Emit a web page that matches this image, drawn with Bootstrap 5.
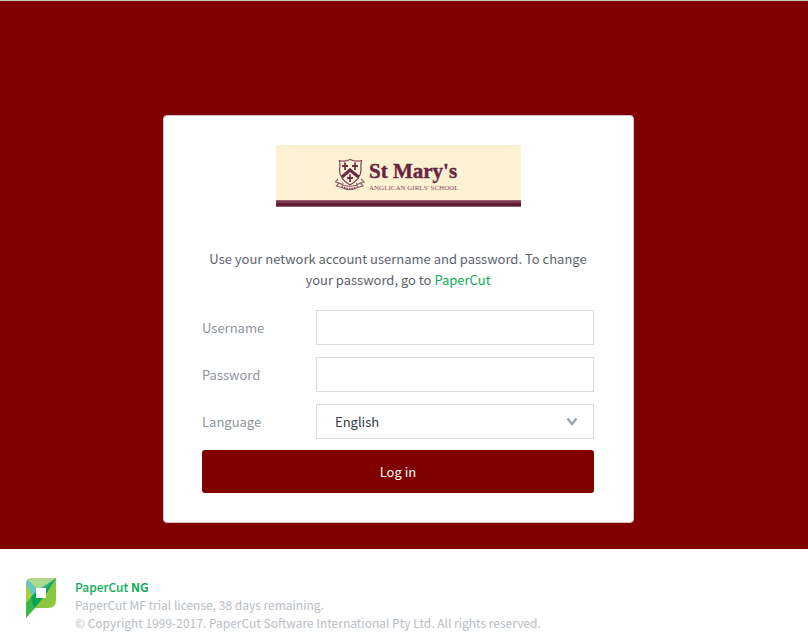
<!DOCTYPE html>
<html lang="en">
<head>
<meta charset="utf-8">
<meta name="viewport" content="width=device-width, initial-scale=1">
<title>PaperCut Login</title>
<link rel="stylesheet" href="https://cdn.jsdelivr.net/npm/bootstrap@5.3.0/dist/css/bootstrap.min.css">
<style>
body { font-family: "Noto Sans CJK SC", "Noto Sans", sans-serif; font-size: 13px; line-height: 21px; color: #5d636b; background: #fff; }
.login-area { background: #800000; border-top: 1px solid #c8c4c0; padding: 114px 11px 26px 0; }
.login-box { max-width: 471px; background: #fff; border: 1px solid #d6c4c4; border-radius: 4px; padding: 29px 39px 29px 38px; }
.school-logo { width: 245px; height: 62px; margin-bottom: 41px; }
.intro { margin-bottom: 20px; }
.brand-link { color: #0eac58; text-decoration: none; }
.field-row { display: grid; grid-template-columns: 114px 1fr; align-items: center; margin-bottom: 12px; }
.field-row label { color: #8e959d; }
.field-row .form-control, .field-row .form-select { height: 35px; font-size: 13px; line-height: 21px; border: 1px solid #d5dbe0; border-radius: 0; color: #343b42; padding: 6px 18px; }
.field-row .form-select { background-image: url("data:image/svg+xml,%3Csvg xmlns='http://www.w3.org/2000/svg' viewBox='0 0 12 10'%3E%3Cpath d='M1.5 1.5 6 7 10.5 1.5' fill='none' stroke='%2394a0aa' stroke-width='2.2'/%3E%3C/svg%3E"); background-size: 12px 10px; background-position: right 15px center; }
.btn-login { background: #800000; color: #fff; height: 43px; font-size: 13px; border: 0; border-radius: 3px; margin-top: -1px; }
.btn-login:hover { background: #6b0000; color: #fff; }
.page-foot { padding: 29px 26px 5px; font-size: 12px; line-height: 18px; color: #b9bec6; }
.foot-text { margin-left: 19px; }
.product-name { font-weight: 500; }
</style>
<script src="https://cdn.jsdelivr.net/npm/bootstrap@5.3.0/dist/js/bootstrap.bundle.min.js"></script>
</head>
<body>
<main class="login-area">
  <div class="login-box mx-auto">
    <svg class="school-logo d-block mx-auto" viewBox="0 0 245 62" role="img" aria-label="St Mary's Anglican Girls' School">
      <rect width="245" height="62" fill="#fdf1d3"/>
      <rect y="55" width="245" height="7" fill="#97606f"/>
      <rect y="56" width="245" height="2" fill="#7b3b50"/>
      <rect y="58" width="245" height="3" fill="#5e1d35"/>
      <g fill="none" stroke="#80405a" stroke-width="1.2">
        <path d="M63.500 15.500Q69 17 74 14.500Q80 17 85.500 15.500Q84.500 20 85 25Q85 34 74 40Q63.500 34 63.500 25Q64.500 20 63.500 15.500Z"/>
        <path d="M66 32 74 25 82.500 32" stroke="#692843" stroke-width="3"/>
        <path d="M69 17.500V25M66 21H72M79 17.500V25M76 21H82M74 29.500V37M71 33H77" stroke="#70304a" stroke-width="1.800"/>
        <path d="M62 34 59.500 37 63 38 60.500 41 66 42.500Q73.500 47 81.500 42.500L87 41 84.500 38 88 37 85 34M63 38Q73.500 45 84.500 38M66 42.500 67 38M81.500 42.500 80.500 38" stroke="#935e70"/>
        <path d="M68 42.500Q74 45 80 42.500" stroke="#7a3d55" stroke-width="1.500" stroke-dasharray="1.500 1"/>
      </g>
      <text x="93" y="33" font-family="Liberation Serif, serif" font-weight="700" font-size="21" fill="#672440" stroke="#672440" stroke-width=".4">St Mary's</text>
      <text x="93" y="45" font-family="Liberation Serif, serif" font-size="7" fill="#88495f">ANGLICAN GIRLS' SCHOOL</text>
    </svg>
    <p class="intro text-center">Use your network account username and password. To change your password, go to <a class="brand-link" href="#">PaperCut</a></p>
    <form>
      <div class="field-row"><label for="username">Username</label><input class="form-control" id="username" type="text"></div>
      <div class="field-row"><label for="password">Password</label><input class="form-control" id="password" type="password"></div>
      <div class="field-row"><label for="language">Language</label><select class="form-select" id="language"><option>English</option></select></div>
      <button class="btn btn-login w-100 d-block" type="submit">Log in</button>
    </form>
  </div>
</main>
<footer class="page-foot d-flex align-items-start">
  <svg class="flex-shrink-0" width="30" height="40" viewBox="0 0 30 40" aria-hidden="true">
    <path d="M6 0H30V22Q30 30 22 30H9L0 40V6Q0 0 6 0Z" fill="#8cc63f"/>
    <path d="M6 0H30L16 10H10L2 2Q4 0 6 0Z" fill="#b0d98e"/>
    <path d="M2 2 10 10V17L5 18 0 7Q0 3 2 2Z" fill="#62c9c8"/>
    <path d="M0 6 6 17 0 26Z" fill="#a5cf42"/>
    <path d="M0 25 10 14V20L14 24 0 40Z" fill="#3cb54a"/>
    <path d="M5 19 10 14V20H17L8 30Z" fill="#00a651"/>
    <path d="M30 0 15 10H20V16Z" fill="#2bb98c"/>
    <path d="M30 0 20 10V16Z" fill="#16a56c"/>
    <rect x="10" y="10" width="10" height="10" fill="#fff"/>
  </svg>
  <div class="foot-text">
    <div><a class="brand-link product-name" href="#">PaperCut <b>NG</b></a></div>
    <div>PaperCut MF trial license, 38 days remaining.</div>
    <div>© Copyright 1999-2017. PaperCut Software International Pty Ltd. All rights reserved.</div>
  </div>
</footer>
</body>
</html>
